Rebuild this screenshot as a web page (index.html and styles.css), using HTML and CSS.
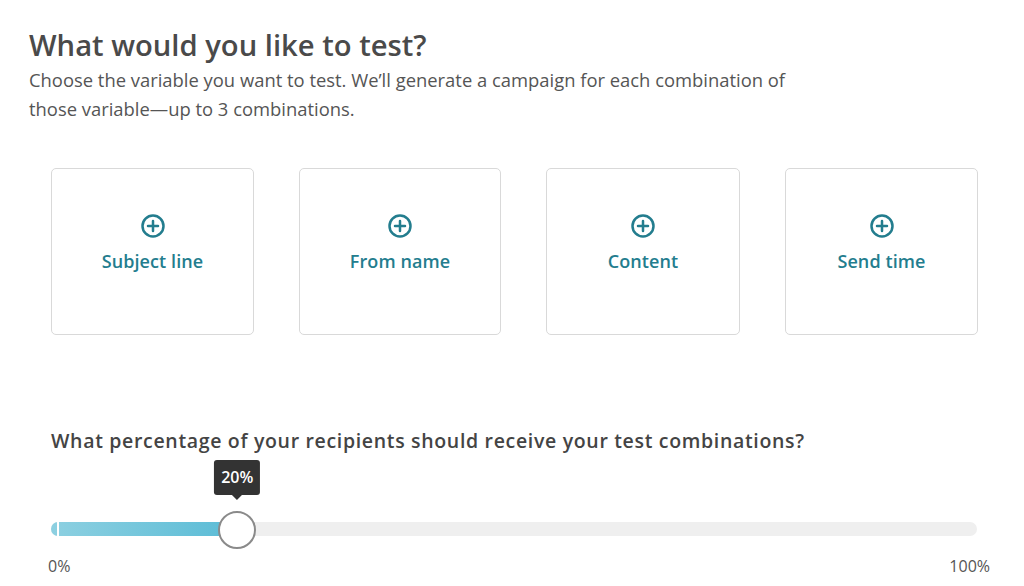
FILE: index.html
```html
<!DOCTYPE html>
<html>
<head>
    <title>A/B Test Setup</title>
    <link rel="stylesheet" href="styles.css">
</head>
<body>
    <div class="page">
        <h1>What would you like to test?</h1>
        <p class="lead">Choose the variable you want to test. We’ll generate a campaign for each combination of those variable—up to 3 combinations.</p>

        <div class="cards">
            <div class="card">
                <svg class="plus" width="24" height="24" viewBox="0 0 24 24"><circle cx="12" cy="12" r="10.5"/><path d="M12 7v10M7 12h10"/></svg>
                <span>Subject line</span>
            </div>
            <div class="card">
                <svg class="plus" width="24" height="24" viewBox="0 0 24 24"><circle cx="12" cy="12" r="10.5"/><path d="M12 7v10M7 12h10"/></svg>
                <span>From name</span>
            </div>
            <div class="card">
                <svg class="plus" width="24" height="24" viewBox="0 0 24 24"><circle cx="12" cy="12" r="10.5"/><path d="M12 7v10M7 12h10"/></svg>
                <span>Content</span>
            </div>
            <div class="card">
                <svg class="plus" width="24" height="24" viewBox="0 0 24 24"><circle cx="12" cy="12" r="10.5"/><path d="M12 7v10M7 12h10"/></svg>
                <span>Send time</span>
            </div>
        </div>

        <div class="percent">
            <h2>What percentage of your recipients should receive your test combinations?</h2>
            <div class="slider">
                <div class="track">
                    <div class="fill" style="width: 20%"></div>
                    <div class="thumb" style="left: 20%">
                        <div class="tip">20%</div>
                    </div>
                </div>
            </div>
            <div class="scale">
                <span>0%</span>
                <span>100%</span>
            </div>
        </div>
    </div>
</body>
</html>
```

FILE: styles.css
```css
body {
    margin: 0;
    background: #fff;
    font-family: 'Open Sans', 'Liberation Sans', sans-serif;
    color: #4a4a4a;
}

.page {
    padding: 25px 0 0 29px;
}

h1 {
    margin: 0;
    font-size: 29.2px;
    font-weight: 600;
    line-height: 40px;
    color: #4a4a4a;
}

.lead {
    margin: 0;
    width: 775px;
    font-size: 18.4px;
    line-height: 29px;
    color: #555;
}

.cards {
    display: grid;
    grid-template-columns: 203px 202px 194px 193px;
    column-gap: 45px;
    margin: 45px 0 0 22px;
}

.card {
    height: 149px;
    padding-bottom: 16px;
    border: 1px solid #d9d9d9;
    border-radius: 5px;
    display: flex;
    flex-direction: column;
    align-items: center;
    justify-content: center;
    gap: 11px;
    color: #237d8e;
    font-size: 18px;
    font-weight: 600;
    letter-spacing: 0.1px;
}

.card span {
    line-height: 24px;
}

.plus {
    fill: none;
    stroke: #237d8e;
    stroke-width: 2.5;
    stroke-linecap: round;
}

.percent {
    margin: 94px 0 0 22px;
    width: 926px;
}

h2 {
    margin: 0;
    font-size: 19.5px;
    font-weight: 600;
    line-height: 24px;
    letter-spacing: 0.67px;
    color: #444;
}

.slider {
    padding: 69px 0 0;
}

.track {
    position: relative;
    height: 14px;
    border-radius: 7px;
    background: #efefef;
}

.fill {
    position: relative;
    height: 100%;
    border-radius: 7px 0 0 7px;
    background: linear-gradient(to right, #8dd0e1, #5bbcd6);
}

.fill::before {
    content: '';
    position: absolute;
    left: 6px;
    top: 0;
    bottom: 0;
    width: 1.5px;
    background: #fff;
}

.thumb {
    position: absolute;
    top: 50%;
    width: 34px;
    height: 34px;
    margin: -18px 0 0 -18px;
    border: 2px solid #8a8a8a;
    border-radius: 50%;
    background: #fff;
}

.tip {
    position: absolute;
    bottom: 52px;
    left: 50%;
    transform: translateX(-50%);
    padding: 0 7px;
    height: 35px;
    line-height: 35px;
    background: #333;
    border-radius: 3px;
    color: #fff;
    font-size: 16px;
    font-weight: 600;
}

.tip::after {
    content: '';
    position: absolute;
    left: 50%;
    bottom: -5px;
    margin-left: -5px;
    border-left: 5px solid transparent;
    border-right: 5px solid transparent;
    border-top: 5px solid #333;
}

.scale {
    display: flex;
    justify-content: space-between;
    margin: 19px -13px 0 -3px;
    font-size: 16px;
    color: #555;
}
```
